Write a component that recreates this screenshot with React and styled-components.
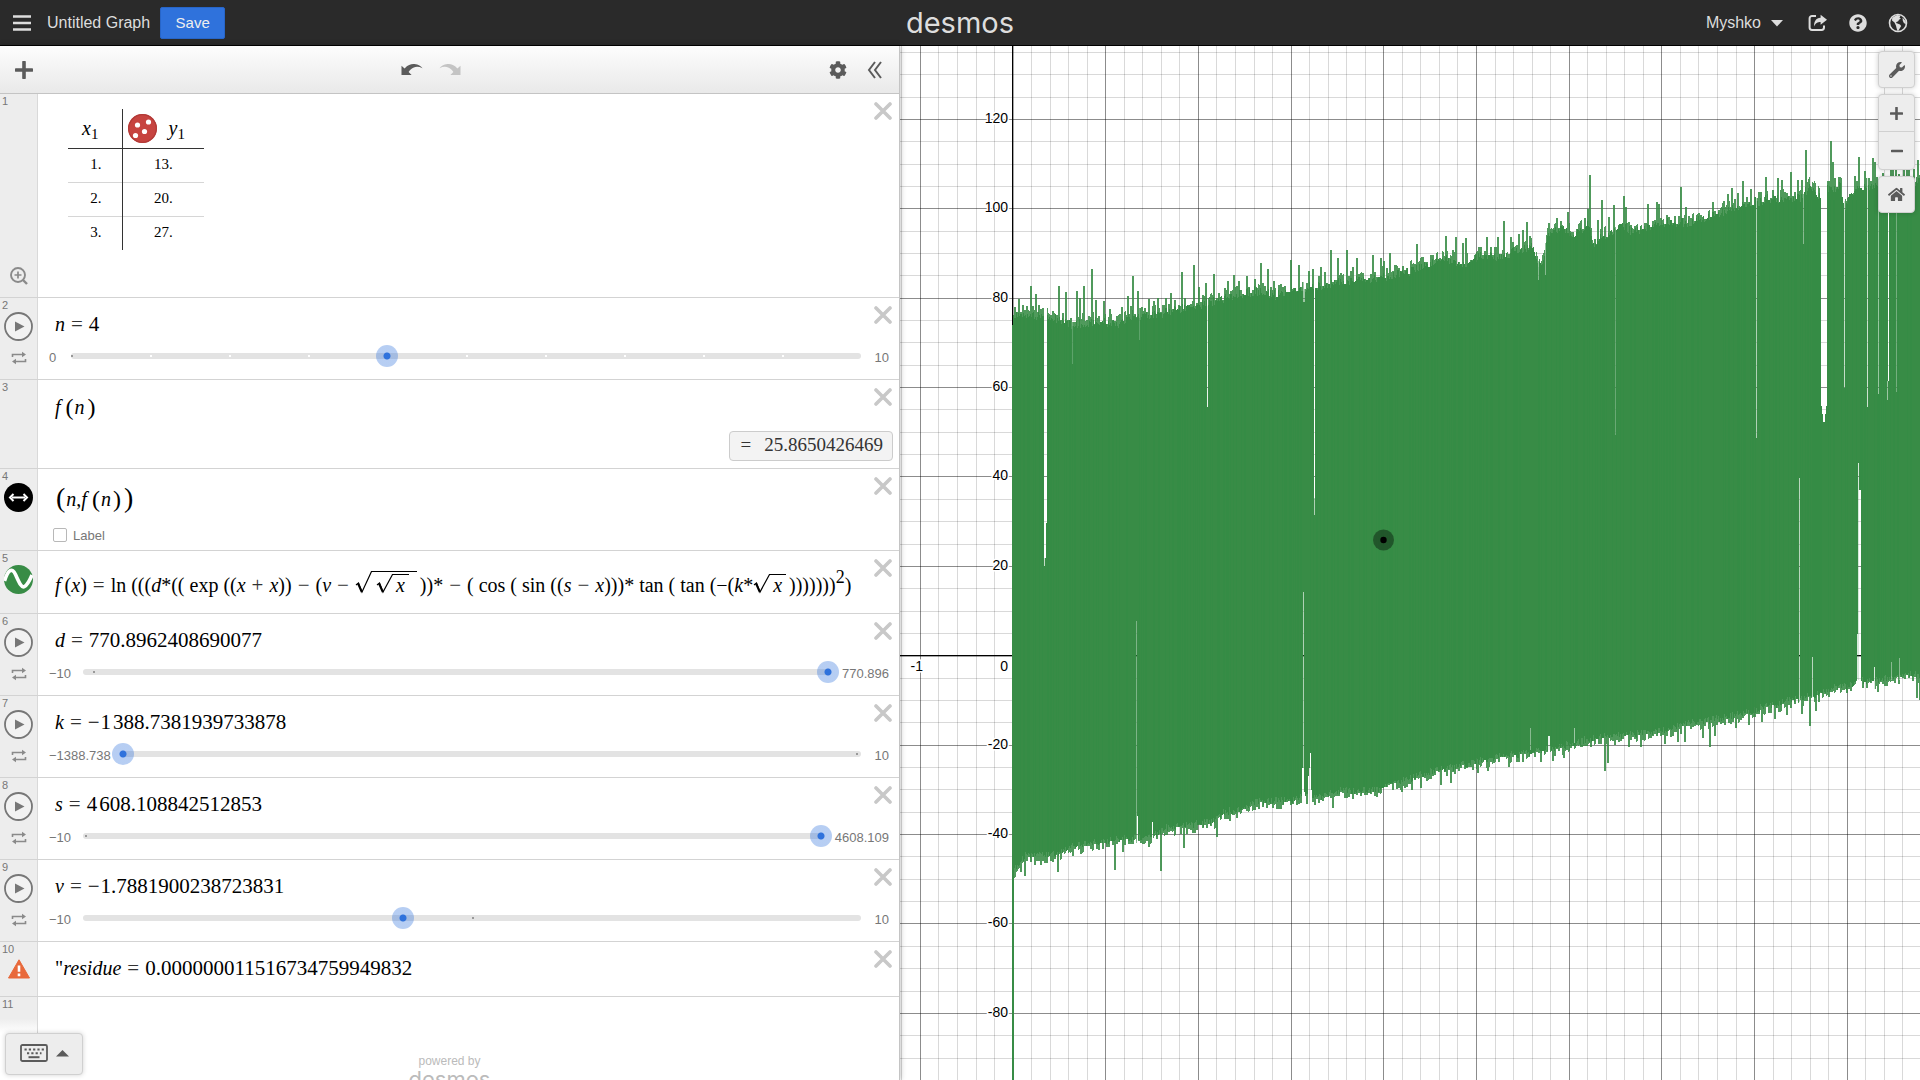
import React from 'react';
import styled, { createGlobalStyle } from 'styled-components';
import { FaCog, FaWrench, FaHome, FaQuestionCircle } from 'react-icons/fa';

const GlobalStyle = createGlobalStyle`
  *, *::before, *::after { box-sizing: border-box; }
  body {
    margin: 0;
    overflow: hidden;
    background: #fff;
    font-family: "Liberation Sans", Arial, sans-serif;
    color: #000;
  }
  button { font: inherit; border: 0; padding: 0; background: none; cursor: pointer; }
`;

const Page = styled.div`
  display: flex;
  flex-direction: column;
  height: 100vh;
`;

/* ---------- header ---------- */

const Header = styled.header`
  display: grid;
  grid-template-columns: 1fr auto 1fr;
  align-items: center;
  flex: none;
  height: 46px;
  background: #2a2a2a;
  border-bottom: 1px solid #000;
  color: #ddd;
  font-size: 16px;
`;

const HeaderSide = styled.div`
  display: flex;
  align-items: center;
  justify-content: ${(p) => (p.$end ? 'flex-end' : 'flex-start')};
  padding: ${(p) => (p.$end ? '0 12px 0 0' : '0 0 0 12px')};
`;

const HeaderButton = styled.button`
  display: flex;
  align-items: center;
  gap: 10px;
  margin-left: ${(p) => p.$gap || 0}px;
  color: #ddd;
`;

const GraphTitle = styled.span`
  margin: 0 10px 0 15px;
  padding-top: 1px;
`;

const SaveButton = styled.button`
  width: 65px;
  height: 32px;
  background: #2f72dc;
  border: 1px solid #2765c8;
  border-radius: 2px;
  color: #eee;
  font-size: 15px;
`;

const Logo = styled.span`
  font-family: Inter, "DejaVu Sans", sans-serif;
  font-size: ${(p) => p.$size}px;
  line-height: 1;
  color: ${(p) => p.$color};
`;

/* ---------- expression panel ---------- */

const Main = styled.main`
  display: flex;
  flex: 1;
  min-height: 0;
`;

const Panel = styled.section`
  position: relative;
  z-index: 1;
  display: flex;
  flex-direction: column;
  flex: 0 0 900px;
  overflow: hidden;
  background: #fff;
  border-right: 1px solid #c4c4c4;
`;

const PanelWrap = styled.div`
  display: flex;
  z-index: 1;
  box-shadow: 0 0 6px rgba(0, 0, 0, 0.3);
`;

const Toolbar = styled.div`
  display: flex;
  align-items: center;
  flex: none;
  height: 48px;
  background: linear-gradient(#fdfdfd, #e9e9e9);
  border-bottom: 1px solid #c4c4c4;
  color: #5b5b5b;
`;

const ToolGroup = styled.div`
  display: flex;
  align-items: center;
  justify-content: center;
  flex: ${(p) => (p.$width ? `0 0 ${p.$width}px` : '1')};
  gap: ${(p) => p.$gap || 0}px;
`;

const ToolButton = styled.button`
  display: flex;
  color: ${(p) => (p.disabled ? '#c4c4c4' : '#5b5b5b')};
`;

const List = styled.ol`
  list-style: none;
  margin: 0;
  padding: 0;
`;

const Row = styled.li`
  display: grid;
  grid-template-columns: 38px 1fr;
  border-bottom: ${(p) => (p.$last ? '0' : '1px solid #d3d3d3')};
`;

const Gutter = styled.div`
  display: flex;
  flex-direction: column;
  align-items: center;
  background: ${(p) => (p.$fade ? 'linear-gradient(#ededed 60%, #fff)' : '#ededed')};
  border-right: 1px solid #d9d9d9;
`;

const Index = styled.span`
  align-self: stretch;
  height: 14px;
  padding-left: 2px;
  font-size: 11px;
  line-height: 15px;
  color: #777;
`;

const IconButton = styled.button`
  display: flex;
  margin-top: ${(p) => p.$top || 0}px;
  color: #777;
`;

const Body = styled.div`
  min-width: 0;
  padding-bottom: ${(p) => p.$bottom || 0}px;
`;

const Head = styled.div`
  display: flex;
  align-items: flex-start;
  height: ${(p) => p.$height}px;
`;

const Equation = styled.div`
  flex: 1;
  min-width: 0;
  padding: ${(p) => p.$top || 14}px 0 0 17px;
  font-family: "Liberation Serif", "Times New Roman", serif;
  font-size: 20px;
  line-height: 24px;
  white-space: nowrap;
`;

const CloseButton = styled.button`
  display: flex;
  align-items: center;
  justify-content: center;
  flex: none;
  width: 32px;
  height: 34px;
`;

const Var = styled.i``;

const FnVar = styled.i`
  margin-right: 4px;
`;

const Num = styled.span`
  font-size: 21px;
`;

const Thousands = styled.span`
  margin-right: 2px;
`;

const Minus = styled.span`
  margin-right: 1px;
`;

const Op = styled.span`
  margin: 0 6px;
  font-size: 21px;
  color: #333;
`;

const Big = styled.span`
  margin: 0 ${(p) => p.$gap || 1}px;
  font-size: ${(p) => p.$size}px;
  vertical-align: -1px;
`;

const Power = styled.sup`
  font-size: 18px;
  line-height: 0;
  vertical-align: 9px;
`;

const RootBox = styled.span`
  display: inline-flex;
  align-items: baseline;
  margin-right: 3px;
`;

const Radicand = styled.span`
  padding: ${(p) => (p.$outer ? '2px 5px 0' : '0 4px')};
  margin-left: -1px;
  border-top: 1px solid #000;
  line-height: 20px;
`;

const SliderRow = styled.div`
  display: flex;
  align-items: center;
  height: 22px;
  padding: 0 10px 0 11px;
  font-size: 13px;
  color: #777;
`;

const Bound = styled.label`
  flex: 0 0 ${(p) => p.$width}px;
  padding-top: 3px;
  text-align: ${(p) => (p.$end ? 'right' : 'left')};
  white-space: nowrap;
`;

const Track = styled.div`
  position: relative;
  flex: 1;
  display: flex;
  align-items: center;
  height: 6px;
  border-radius: 3px;
  background: #e3e3e3;
`;

const Tick = styled.span`
  position: absolute;
  top: 2px;
  width: 2px;
  height: 2px;
  background: ${(p) => (p.$zero ? '#999' : '#fff')};
`;

const Range = styled.input`
  position: relative;
  appearance: none;
  flex: 1;
  height: 22px;
  margin: 0 -9px;
  background: transparent;
  &::-webkit-slider-thumb {
    appearance: none;
    width: 22px;
    height: 22px;
    border-radius: 50%;
    background: radial-gradient(circle, #2f72dc 3px, rgba(47, 114, 220, 0.35) 4px);
  }
`;

const AnswerLine = styled.div`
  display: flex;
  justify-content: flex-end;
  padding-right: 6px;
`;

const Answer = styled.output`
  display: flex;
  align-items: center;
  gap: 13px;
  height: 30px;
  padding: 0 9px 2px 11px;
  background: #f3f3f3;
  border: 1px solid #ccc;
  border-radius: 4px;
  font-family: "Liberation Serif", "Times New Roman", serif;
  font-size: 19px;
  color: #333;
`;

const CheckLabel = styled.label`
  display: flex;
  align-items: center;
  gap: 6px;
  height: 14px;
  margin-left: 15px;
  font-size: 13px;
  color: #777;
`;

const Checkbox = styled.input`
  appearance: none;
  width: 14px;
  height: 14px;
  margin: 0;
  border: 1px solid #b8b8b8;
  border-radius: 2px;
  background: #fff;
`;

const TableHead = styled.div`
  display: flex;
  justify-content: space-between;
  align-items: flex-start;
  height: 203px;
  padding-left: 30px;
`;

const DataTable = styled.table`
  margin-top: 15px;
  border-collapse: collapse;
  font-family: "Liberation Serif", "Times New Roman", serif;
  font-size: 15px;
  th, td { padding: 0; height: 34px; font-weight: normal; }
  td { padding-bottom: 2px; }
  th { height: 39px; border-bottom: 1px solid #333; font-size: 20px; }
  tr > :first-child { width: 54px; border-right: 1px solid #333; text-align: right; padding-right: 20px; }
  tr > :last-child { width: 82px; text-align: center; }
  tr > th:first-child { padding-right: 23px; }
  tbody tr + tr > * { border-top: 1px solid #d6d6d6; }
  sub { font-size: 15px; line-height: 0; vertical-align: -4px; }
`;

const SeriesHead = styled.div`
  display: flex;
  align-items: center;
  gap: 12px;
  padding-left: 5px;
`;

const Powered = styled.footer`
  display: flex;
  flex-direction: column;
  align-items: center;
  flex: none;
  margin-top: 21px;
  font-size: 12px;
  line-height: 14px;
  color: #bbb;
`;

const KeyboardButton = styled.button`
  position: absolute;
  left: 5px;
  bottom: 5px;
  display: flex;
  align-items: center;
  justify-content: center;
  gap: 8px;
  width: 78px;
  height: 42px;
  padding-bottom: 3px;
  background: #ededed;
  border: 1px solid #d0d0d0;
  border-radius: 4px;
  box-shadow: 0 0 5px rgba(0, 0, 0, 0.18);
  color: #5b5b5b;
`;

/* ---------- graph ---------- */

const GraphPane = styled.section`
  position: relative;
  flex: 1;
  min-width: 0;
  overflow: hidden;
`;

const Canvas = styled.svg`
  display: block;
  width: 100%;
  height: 100%;
  font-family: "Liberation Sans", Arial, sans-serif;
  font-size: 14px;
`;

const PaneControls = styled.div`
  position: absolute;
  top: 5px;
  right: 5px;
  display: flex;
  flex-direction: column;
  gap: 6px;
`;

const ControlGroup = styled.div`
  display: flex;
  flex-direction: column;
  width: 37px;
  background: #ededed;
  border: 1px solid #d0d0d0;
  border-radius: 4px;
  box-shadow: 0 0 5px rgba(0, 0, 0, 0.2);
`;

const ControlButton = styled.button`
  display: flex;
  align-items: center;
  justify-content: center;
  height: ${(p) => p.$height || 35}px;
  color: #5b5b5b;
  & + & { border-top: 1px solid #d0d0d0; }
`;

/* ---------- icons ---------- */

const MenuIcon = () => (
  <svg width="20" height="18" viewBox="0 0 20 18">
    <path d="M1 2.5h18M1 9h18M1 15.5h18" stroke="#ddd" strokeWidth="2.6" />
  </svg>
);
const CaretDown = () => (
  <svg width="12" height="8" viewBox="0 0 12 8"><path d="M0 1h12L6 7.5z" fill="#ddd" /></svg>
);
const ShareIcon = () => (
  <svg width="20" height="18" viewBox="0 0 20 18" fill="none">
    <path d="M8 2H4a2.4 2.4 0 0 0-2.4 2.4v9.2A2.4 2.4 0 0 0 4 16h9.6a2.4 2.4 0 0 0 2.4-2.4V11.5" stroke="#ddd" strokeWidth="2" />
    <path d="M12.6 0.8 19 5.8l-6.400 5V8C9.500 8 7.600 9 6.200 12.600 5.600 7.500 8 4 12.600 3.700z" fill="#ddd" />
  </svg>
);
const GlobeIcon = () => (
  <svg width="20" height="20" viewBox="0 0 20 20">
    <circle cx="10" cy="10" r="8.500" fill="none" stroke="#ddd" strokeWidth="1.600" />
    <path d="M6 3.500 9.500 2l3 .8-1 2 1.500.7-2 1.300-.8 1.500-1.700.7-.5 1 1.500.5 2.500 1 1.200 1.500-1.200 2-1.500 2.500-.7 1.200-1.200-3.500L8 12.800 6.500 9.500 4 7.500 4.200 5z" fill="#ddd" />
    <path d="M14.500 4.500 17.500 8l.7 3-2.200-.8-1.200-2.500z" fill="#ddd" />
  </svg>
);
const PlusIcon = ({ size, weight }) => (
  <svg width={size} height={size} viewBox="0 0 18 18">
    <path d="M9 1.200v15.600M1.200 9h15.600" stroke="#5b5b5b" strokeWidth={weight} strokeLinecap="round" />
  </svg>
);
const MinusIcon = () => (
  <svg width="12" height="12" viewBox="0 0 12 12"><path d="M1 6h10" stroke="#5b5b5b" strokeWidth="2.600" strokeLinecap="round" /></svg>
);
const UndoIcon = ({ flip }) => (
  <svg width="22" height="14" viewBox="0 0 22 14">
    <g transform={flip ? 'translate(22 0) scale(-1 1)' : undefined}>
      <path d="M0.500 2.800 3.600 5.500C7 1.500 10.500.7 13.500 1c4 .4 6.500 2 8 4.300C18.500 3.700 15.500 3.400 12.800 4.400 10.800 5.200 9 6.800 7.600 9l3 3H.5z" fill="currentColor" />
    </g>
  </svg>
);
const CollapseIcon = () => (
  <svg width="16" height="18" viewBox="0 0 16 18">
    <path d="M8 1 2 9l6 8M14 1 8 9l6 8" fill="none" stroke="#5b5b5b" strokeWidth="2" />
  </svg>
);
const CloseIcon = () => (
  <svg width="18" height="18" viewBox="0 0 18 18">
    <path d="M2 2l14 14M16 2 2 16" stroke="#c8c8c8" strokeWidth="3.600" strokeLinecap="round" />
  </svg>
);
const PlayIcon = () => (
  <svg width="29" height="29" viewBox="0 0 29 29">
    <circle cx="14.500" cy="14.500" r="13.500" fill="#f2f2f2" stroke="#777" strokeWidth="1.800" />
    <path d="M11 9.500v10l9.500-5z" fill="#777" />
  </svg>
);
const LoopIcon = () => (
  <svg width="16" height="14" viewBox="0 0 16 14">
    <path d="M1.500 6V3.500h10M14.500 8v2.500h-10" fill="none" stroke="#8a8a8a" strokeWidth="1.600" />
    <path d="M11 .8 15 3.500 11 6.200zM5 7.800 1 10.500l4 2.700z" fill="#8a8a8a" />
  </svg>
);
const ZoomFitIcon = () => (
  <svg width="18" height="18" viewBox="0 0 18 18" fill="none" stroke="#8a8a8a">
    <circle cx="8" cy="8" r="7" strokeWidth="1.900" />
    <path d="M13 13l4 4" strokeWidth="2.400" />
    <path d="M8 4.500v7M4.500 8h7" strokeWidth="1.700" />
  </svg>
);
const PointIcon = () => (
  <svg width="29" height="29" viewBox="0 0 29 29">
    <circle cx="14.500" cy="14.500" r="14.500" fill="#000" />
    <path d="M8 14.500h13" stroke="#fff" strokeWidth="2" />
    <path d="M9.500 11 6 14.500 9.500 18M19.500 11l3.500 3.500-3.500 3.500" fill="none" stroke="#fff" strokeWidth="2" />
  </svg>
);
const CurveIcon = () => (
  <svg width="29" height="29" viewBox="0 0 29 29">
    <circle cx="14.500" cy="14.500" r="14.500" fill="#388c46" />
    <path d="M0.500 16C4 5 8 2 11.500 9.500S17.500 23.500 20.500 21.500c3-1.600 5-5.500 7.500-11.500" fill="none" stroke="#fff" strokeWidth="3.600" />
  </svg>
);
const DotsIcon = () => (
  <svg width="29" height="29" viewBox="0 0 29 29">
    <circle cx="14.500" cy="14.500" r="14.500" fill="#c74440" />
    <circle cx="14.500" cy="14.500" r="13.800" fill="none" stroke="#b23a37" strokeWidth="1.200" />
    <g fill="#fff">
      <circle cx="9.500" cy="11" r="2.600" /><circle cx="20.500" cy="8" r="2.600" />
      <circle cx="16.500" cy="17.500" r="2.600" /><circle cx="7.500" cy="21.500" r="2.600" />
    </g>
  </svg>
);
const WarningIcon = () => (
  <svg width="22" height="20" viewBox="0 0 22 20">
    <path d="M11 .8 21.500 19H.5z" fill="#e8693b" stroke="#e8693b" strokeLinejoin="round" />
    <path d="M11 6.500v6.300M11 14.600v2.600" stroke="#fff" strokeWidth="2.600" />
  </svg>
);
const KeyboardIcon = () => (
  <svg width="28" height="18" viewBox="0 0 28 18">
    <rect x="1" y="1" width="26" height="16" rx="1.500" fill="none" stroke="#5b5b5b" strokeWidth="1.800" />
    <path d="M4.500 5.500h19.500" stroke="#5b5b5b" strokeWidth="2" strokeDasharray="2.200 2.100" />
    <path d="M7 9.300h14.500" stroke="#5b5b5b" strokeWidth="2" strokeDasharray="2.200 2.100" />
    <path d="M8.500 13.200h11" stroke="#5b5b5b" strokeWidth="2" />
  </svg>
);
const CaretUp = () => (
  <svg width="13" height="8" viewBox="0 0 13 8"><path d="M0 7.500h13L6.500 1z" fill="#5b5b5b" /></svg>
);

/* ---------- expression pieces ---------- */

function Root({ children, outer }) {
  const h = outer ? 21 : 18;
  return (
    <RootBox>
      <svg width="17" height={h} viewBox={`0 0 17 ${h}`} overflow="visible">
        <path d={`M1 ${h - 7} 3.500 ${h - 9} 7 ${h} 16.500 .5`} fill="none" stroke="#000" strokeWidth="1.200" />
        <path d={`M3 ${h - 8.5} 6.800 ${h}`} stroke="#000" strokeWidth="2" />
      </svg>
      <Radicand $outer={outer}>{children}</Radicand>
    </RootBox>
  );
}

function ExpressionHead({ children, height, top, index }) {
  return (
    <Head $height={height}>
      <Equation $top={top}>{children}</Equation>
      <CloseButton aria-label={`Delete expression ${index}`}><CloseIcon /></CloseButton>
    </Head>
  );
}

function SliderExpression({ index, name, value, text, min, max, minText, maxText, minWidth, maxWidth, ticks }) {
  const id = `slider-${name}`;
  return (
    <Row>
      <Gutter>
        <Index>{index}</Index>
        <IconButton aria-label={`Play ${name}`}><PlayIcon /></IconButton>
        <IconButton $top={10} aria-label={`Loop mode for ${name}`}><LoopIcon /></IconButton>
      </Gutter>
      <Body $bottom={12}>
        <ExpressionHead height={47} index={index}><Var>{name}</Var><Op>=</Op><Num>{text}</Num></ExpressionHead>
        <SliderRow>
          <Bound htmlFor={id} $width={minWidth}>{minText}</Bound>
          <Track>
            {ticks.map((t) => (
              <Tick key={t} $zero={t === 0} style={{ left: `${((t - min) / (max - min)) * 100}%` }} />
            ))}
            <Range id={id} type="range" min={min} max={max} step="any" defaultValue={value} aria-label={name} />
          </Track>
          <Bound htmlFor={id} $width={maxWidth} $end>{maxText}</Bound>
        </SliderRow>
      </Body>
    </Row>
  );
}

/* ---------- plot data ---------- */

const UPPER = [[1012, 310], [1040, 312], [1060, 317], [1072, 321], [1100, 318], [1118, 321], [1130, 312], [1150, 313], [1165, 309], [1190, 303], [1205, 301], [1230, 293], [1255, 288], [1275, 292], [1300, 285], [1330, 281], [1360, 276], [1400, 271], [1433, 260], [1440, 255], [1467, 260], [1480, 252], [1500, 254], [1515, 247], [1533, 243], [1538, 264], [1544, 254], [1547, 233], [1557, 226], [1567, 227], [1574, 232], [1587, 222], [1593, 240], [1607, 232], [1620, 220], [1633, 230], [1647, 223], [1667, 219], [1690, 220], [1707, 213], [1720, 210], [1733, 203], [1750, 200], [1767, 196], [1800, 196], [1810, 181], [1820, 195], [1828, 184], [1840, 184], [1844, 206], [1850, 190], [1860, 184], [1880, 183], [1921, 178]];
const PEAKS = [[1014, 307], [1018, 299], [1022, 305], [1030, 286], [1035, 294], [1042, 308], [1058, 286], [1065, 292], [1076, 291], [1079, 298], [1083, 286], [1091, 269], [1095, 300], [1103, 301], [1109, 309], [1121, 307], [1127, 296], [1132, 276], [1137, 291], [1141, 307], [1148, 299], [1153, 301], [1157, 298], [1165, 298], [1170, 293], [1181, 272], [1193, 265], [1198, 287], [1205, 283], [1213, 274], [1227, 281], [1233, 275], [1238, 281], [1246, 276], [1254, 279], [1260, 263], [1267, 269], [1273, 281], [1290, 260], [1298, 265], [1308, 271], [1312, 269], [1320, 267], [1324, 272], [1330, 250], [1337, 258], [1346, 250], [1352, 267], [1356, 258], [1372, 255], [1380, 258], [1383, 261], [1389, 253], [1395, 265], [1416, 244], [1422, 258], [1432, 255], [1445, 236], [1455, 237], [1462, 243], [1465, 238], [1478, 247], [1486, 237], [1497, 237], [1503, 221], [1510, 237], [1518, 234], [1522, 230], [1526, 222], [1529, 236], [1548, 223], [1556, 218], [1567, 212], [1587, 209], [1589, 175], [1597, 220], [1601, 200], [1608, 217], [1613, 205], [1623, 196], [1625, 207], [1647, 204], [1656, 202], [1658, 204], [1680, 187], [1685, 207], [1712, 202], [1723, 201], [1727, 194], [1731, 188], [1737, 193], [1742, 181], [1750, 189], [1765, 177], [1777, 178], [1781, 180], [1790, 172], [1797, 180], [1801, 180], [1805, 150], [1830, 141], [1832, 162], [1840, 178], [1854, 176], [1858, 157], [1864, 171], [1872, 158], [1874, 162], [1882, 173], [1890, 165], [1892, 165], [1895, 167], [1903, 168], [1906, 166], [1908, 170], [1913, 169], [1917, 160]];
const LOWER = [[1012, 876], [1018, 868], [1025, 860], [1040, 860], [1060, 857], [1070, 851], [1100, 846], [1130, 842], [1150, 841], [1165, 832], [1198, 828], [1212, 826], [1223, 816], [1240, 814], [1253, 806], [1290, 804], [1302, 799], [1323, 801], [1337, 795], [1373, 794], [1390, 788], [1405, 784], [1433, 775], [1467, 768], [1500, 760], [1527, 757], [1567, 749], [1587, 743], [1633, 738], [1660, 735], [1683, 729], [1720, 722], [1753, 714], [1783, 706], [1817, 698], [1833, 692], [1853, 689], [1857, 683], [1867, 686], [1893, 680], [1921, 678]];
const TROUGHS = [[1020, 872], [1024, 876], [1040, 865], [1057, 872], [1072, 856], [1114, 870], [1122, 852], [1148, 847], [1160, 871], [1183, 848], [1216, 837], [1229, 821], [1332, 808], [1401, 792], [1411, 790], [1420, 788], [1440, 785], [1450, 783], [1477, 773], [1487, 771], [1508, 767], [1540, 762], [1552, 761], [1563, 758], [1604, 771], [1607, 763], [1628, 747], [1640, 747], [1664, 744], [1677, 742], [1684, 742], [1702, 738], [1709, 747], [1714, 736], [1735, 728], [1748, 725], [1761, 722], [1774, 719], [1786, 715], [1801, 714], [1809, 726], [1815, 711], [1877, 692], [1916, 698], [1919, 700]];

/* [x, width, from, to, opacity] */
const GAPS = [
  [1044, 3, 280, 523, 1], [1044, 2, 523, 558, 1], [1044, 1, 558, 566, 0.7],
  [1072, 1, 316, 364, 0.2], [1139, 1, 300, 340, 0.2], [1207, 1, 270, 407, 0.9],
  [1303, 2, 280, 302, 0.5], [1314, 1, 250, 498, 1], [1314, 1, 498, 515, 0.6],
  [1615, 1, 210, 435, 0.25], [1538, 1, 250, 280, 0.4], [1545, 1, 240, 275, 0.4],
  [1756, 1, 190, 438, 0.6], [1803, 1, 180, 244, 0.4],
  [1821, 6, 160, 406, 1], [1822, 4, 406, 414, 1], [1823, 2, 414, 422, 1],
  [1844, 1, 180, 388, 0.7], [1867, 1, 170, 407, 0.75], [1878, 1, 160, 394, 0.5],
  [1888, 1, 160, 381, 1], [1887, 1, 381, 400, 0.5], [1896, 1, 200, 392, 0.3],
  [1136, 1, 621, 850, 0.35], [1137, 1, 816, 850, 1], [1152, 1, 822, 850, 1],
  [1303, 1, 592, 820, 0.6], [1302, 2, 768, 820, 1], [1304, 1, 792, 820, 1],
  [1308, 1, 776, 820, 1], [1309, 1, 768, 820, 1], [1310, 1, 753, 820, 1], [1311, 1, 790, 820, 1],
  [1530, 1, 728, 750, 0.4], [1548, 2, 736, 760, 0.9], [1574, 1, 728, 743, 0.5],
  [1799, 1, 478, 705, 0.65], [1812, 1, 657, 700, 0.65],
  [1858, 1, 463, 690, 0.8], [1859, 2, 490, 690, 1], [1857, 1, 634, 690, 0.8],
  [1874, 1, 667, 690, 0.8], [1899, 1, 658, 680, 0.4], [1891, 1, 662, 680, 0.4],
];

const noise = (n) => {
  const v = Math.sin(n * 127.1) * 43758.5453;
  return v - Math.floor(v);
};

function edgeAt(points, x) {
  for (let i = 1; i < points.length; i += 1) {
    if (x <= points[i][0]) {
      const [x0, y0] = points[i - 1];
      const [x1, y1] = points[i];
      return y0 + ((y1 - y0) * (x - x0)) / (x1 - x0);
    }
  }
  return points[points.length - 1][1];
}

function buildBand() {
  const upper = [];
  const lower = [];
  const innerUpper = [];
  const innerLower = [];
  for (let x = 1013; x <= 1920; x += 1) {
    const cell = Math.floor(x / 2);
    let top = edgeAt(UPPER, x) - 7 + noise(cell) * 13;
    let bottom = edgeAt(LOWER, x) - 4 + noise(cell + 900) * 9;
    PEAKS.forEach(([px, py]) => { if (x === px || x === px + 1) top = Math.min(top, py); });
    TROUGHS.forEach(([px, py]) => { if (x === px || x === px + 1) bottom = Math.max(bottom, py); });
    upper.push(`L${x} ${Math.round(top)}H${x + 1}`);
    lower.push(`L${x + 1} ${Math.round(bottom)}H${x}`);
    innerUpper.push(`L${x} ${Math.round(Math.max(top, edgeAt(UPPER, x) - 2 + noise(x + 31) * 10))}H${x + 1}`);
    innerLower.push(`L${x + 1} ${Math.round(Math.min(bottom, edgeAt(LOWER, x) - noise(x + 77) * 8))}H${x}`);
  }
  const close = (a, b) => `M1013 600${a.join('')}${b.reverse().join('')}Z`;
  return [close(upper, lower), close(innerUpper, innerLower)];
}

const [OUTER_BAND, INNER_BAND] = buildBand();

const TEXTURE = Array.from({ length: 900 }, (_, i) => i)
  .filter((i) => noise(i + 5) > 0.6)
  .map((i) => `M${1014 + i}.5 200V870`)
  .join('');

const range = (from, to) => Array.from({ length: to - from + 1 }, (_, i) => from + i);
const MINOR_X = range(-6, 140).filter((k) => k % 5).map((k) => Math.round(1012.6 + (92.68 / 5) * k));
const MAJOR_X = range(-1, 28).filter((k) => k).map((k) => Math.round(1012.6 + 92.68 * k));
const MINOR_Y = range(-70, 27).filter((k) => k % 4).map((k) => Math.floor(655.8 - 22.35 * k));
const MAJOR_Y = range(-17, 6).filter((k) => k).map((k) => [k * 20, Math.floor(655.6 - 89.4 * k)]);
const LABELS_Y = MAJOR_Y.filter(([v]) => v >= -80);

function Graph() {
  return (
    <Canvas role="img" aria-label="Graph of the expressions">
      <defs>
        <mask id="gaps" maskUnits="userSpaceOnUse" x="900" y="40" width="1100" height="1100">
          <rect x="900" y="40" width="1100" height="1100" fill="#fff" />
          {GAPS.map(([x, w, y0, y1, o]) => (
            <rect key={`${x}-${y0}`} x={x} y={y0} width={w} height={y1 - y0} fill="#000" opacity={o} />
          ))}
        </mask>
        <clipPath id="band"><path d={INNER_BAND} /></clipPath>
      </defs>
      <g transform="translate(-900 -46)" shapeRendering="crispEdges">
        <g stroke="#000" strokeOpacity="0.15">
          {MINOR_X.map((x) => <path key={x} d={`M${x}.5 46V2200`} />)}
          {MINOR_Y.map((y) => <path key={y} d={`M900 ${y}.5H3600`} />)}
        </g>
        <g stroke="#000" strokeOpacity="0.45">
          {MAJOR_X.map((x) => <path key={x} d={`M${x}.5 46V2200`} />)}
          {MAJOR_Y.map(([v, y]) => <path key={v} d={`M900 ${y}.5H3600`} />)}
        </g>
        <path d="M1012.500 46V2200M900 655.500H3600" stroke="#000" />
        <path d="M1013.500 46V2200M900 656.500H3600" stroke="#000" strokeOpacity="0.35" />
        <g textAnchor="end" stroke="#fff" strokeWidth="3" paintOrder="stroke" fill="#000" shapeRendering="auto">
          {LABELS_Y.map(([v, y]) => <text key={v} x="1008" y={y + 4}>{v}</text>)}
          <text x="1008" y="671">0</text>
          <text x="923" y="671">-1</text>
        </g>
        <g mask="url(#gaps)">
          <path d={OUTER_BAND} fill="#388c46" fillOpacity="0.88" />
          <path d={INNER_BAND} fill="#388c46" />
          <path d={TEXTURE} clipPath="url(#band)" stroke="#2c8a43" strokeOpacity="0.2" />
        </g>
        <path d="M1012 325h2V2200h-2z" fill="#388c46" />
      </g>
      <g transform="translate(-900 -46)">
        <circle cx="1383.500" cy="540" r="10.500" fill="#000" fillOpacity="0.38" />
        <circle cx="1383.500" cy="540" r="3.200" fill="#000" />
      </g>
    </Canvas>
  );
}

/* ---------- page ---------- */

export default function App() {
  return (
    <Page>
      <GlobalStyle />
      <Header>
        <HeaderSide>
          <HeaderButton aria-label="Open menu"><MenuIcon /></HeaderButton>
          <GraphTitle>Untitled Graph</GraphTitle>
          <SaveButton>Save</SaveButton>
        </HeaderSide>
        <Logo $size={29} $color="#ddd">desmos</Logo>
        <HeaderSide $end>
          <HeaderButton>Myshko<CaretDown /></HeaderButton>
          <HeaderButton $gap={25} aria-label="Share"><ShareIcon /></HeaderButton>
          <HeaderButton $gap={21} aria-label="Help"><FaQuestionCircle size={18} /></HeaderButton>
          <HeaderButton $gap={21} aria-label="Language"><GlobeIcon /></HeaderButton>
        </HeaderSide>
      </Header>
      <Main>
        <PanelWrap>
          <Panel>
            <Toolbar>
              <ToolGroup $width={48}><ToolButton aria-label="Add item"><PlusIcon size={18} weight={3.6} /></ToolButton></ToolGroup>
              <ToolGroup $gap={16}>
                <ToolButton aria-label="Undo"><UndoIcon /></ToolButton>
                <ToolButton aria-label="Redo" disabled><UndoIcon flip /></ToolButton>
              </ToolGroup>
              <ToolGroup $width={86} $gap={20}>
                <ToolButton aria-label="Edit list"><FaCog size={18} /></ToolButton>
                <ToolButton aria-label="Hide list"><CollapseIcon /></ToolButton>
              </ToolGroup>
            </Toolbar>
            <List>
              <Row>
                <Gutter>
                  <Index>1</Index>
                  <IconButton $top={159} aria-label="Zoom fit"><ZoomFitIcon /></IconButton>
                </Gutter>
                <TableHead>
                  <DataTable>
                    <thead>
                      <tr>
                        <th scope="col"><Var>x</Var><sub>1</sub></th>
                        <th scope="col"><SeriesHead><DotsIcon /><span><Var>y</Var><sub>1</sub></span></SeriesHead></th>
                      </tr>
                    </thead>
                    <tbody>
                      <tr><td>1.</td><td>13.</td></tr>
                      <tr><td>2.</td><td>20.</td></tr>
                      <tr><td>3.</td><td>27.</td></tr>
                    </tbody>
                  </DataTable>
                  <CloseButton aria-label="Delete table"><CloseIcon /></CloseButton>
                </TableHead>
              </Row>
              <SliderExpression index={2} name="n" value={4} text="4" min={0} max={10} minText="0" maxText="10" minWidth={22} maxWidth={28} ticks={[0, 1, 2, 3, 4, 5, 6, 7, 8, 9]} />
              <Row>
                <Gutter><Index>3</Index></Gutter>
                <Body $bottom={7}>
                  <ExpressionHead height={51} top={15} index={3}>
                    <FnVar>f</FnVar><Big $size={24}>(</Big><Var>n</Var><Big $size={24} $gap={3}>)</Big>
                  </ExpressionHead>
                  <AnswerLine><Answer><span>=</span><span>25.8650426469</span></Answer></AnswerLine>
                </Body>
              </Row>
              <Row>
                <Gutter>
                  <Index>4</Index>
                  <IconButton aria-label="Point style"><PointIcon /></IconButton>
                </Gutter>
                <Body $bottom={8}>
                  <ExpressionHead height={59} top={17} index={4}>
                    <Big $size={28}>(</Big><Var>n</Var>,<FnVar>f</FnVar><Big $size={24}>(</Big><Var>n</Var><Big $size={24} $gap={2}>)</Big><Big $size={28}>)</Big>
                  </ExpressionHead>
                  <CheckLabel><Checkbox type="checkbox" />Label</CheckLabel>
                </Body>
              </Row>
              <Row>
                <Gutter>
                  <Index>5</Index>
                  <IconButton aria-label="Curve style"><CurveIcon /></IconButton>
                </Gutter>
                <Body>
                  <ExpressionHead height={62} top={20} index={5}>
                    <FnVar>f</FnVar>(<Var>x</Var>)<Op>=</Op>ln (((<Var>d</Var>*(( exp ((<Var>x</Var><Op>+</Op><Var>x</Var>))<Op>−</Op>(<Var>v</Var><Op>−</Op>
                    <Root outer><Root><Var>x</Var></Root></Root>))*<Op>−</Op>( cos ( sin ((<Var>s</Var><Op>−</Op><Var>x</Var>)))* tan ( tan (−(<Var>k</Var>*<Root><Var>x</Var></Root>)))))))<Power>2</Power>)
                  </ExpressionHead>
                </Body>
              </Row>
              <SliderExpression index={6} name="d" value={770.8962408690077} text="770.8962408690077" min={-10} max={770.896240869} minText="−10" maxText="770.896" minWidth={34} maxWidth={59} ticks={[0]} />
              <SliderExpression index={7} name="k" value={-1388.738} text={<><Minus>−</Minus><Thousands>1</Thousands>388.7381939733878</>} min={-1388.738} max={10} minText="−1388.738" maxText="10" minWidth={72} maxWidth={28} ticks={[0]} />
              <SliderExpression index={8} name="s" value={4608.108} text={<><Thousands>4</Thousands>608.108842512853</>} min={-10} max={4608.109} minText="−10" maxText="4608.109" minWidth={34} maxWidth={66} ticks={[0]} />
              <SliderExpression index={9} name="v" value={-1.7881900238723831} text={<><Minus>−</Minus>1.7881900238723831</>} min={-10} max={10} minText="−10" maxText="10" minWidth={34} maxWidth={28} ticks={[0]} />
              <Row>
                <Gutter>
                  <Index>10</Index>
                  <IconButton $top={3} as="span" title="Warning"><WarningIcon /></IconButton>
                </Gutter>
                <Body $bottom={7}>
                  <ExpressionHead height={47} index={10}>"<Var>residue</Var><Op>=</Op><Num>0.000000011516734759949832</Num></ExpressionHead>
                </Body>
              </Row>
              <Row $last>
                <Gutter $fade><Index>11</Index></Gutter>
                <Body $bottom={36} />
              </Row>
            </List>
            <Powered>
              powered by
              <Logo $size={22} $color="#bbb">desmos</Logo>
            </Powered>
            <KeyboardButton aria-label="Show keypad"><KeyboardIcon /><CaretUp /></KeyboardButton>
          </Panel>
        </PanelWrap>
        <GraphPane>
          <Graph />
          <PaneControls>
            <ControlGroup><ControlButton aria-label="Graph settings"><FaWrench size={16} /></ControlButton></ControlGroup>
            <ControlGroup>
              <ControlButton $height={36} aria-label="Zoom in"><PlusIcon size={13} weight={3.6} /></ControlButton>
              <ControlButton $height={38} aria-label="Zoom out"><MinusIcon /></ControlButton>
            </ControlGroup>
            <ControlGroup><ControlButton aria-label="Default viewport"><FaHome size={17} /></ControlButton></ControlGroup>
          </PaneControls>
        </GraphPane>
      </Main>
    </Page>
  );
}
